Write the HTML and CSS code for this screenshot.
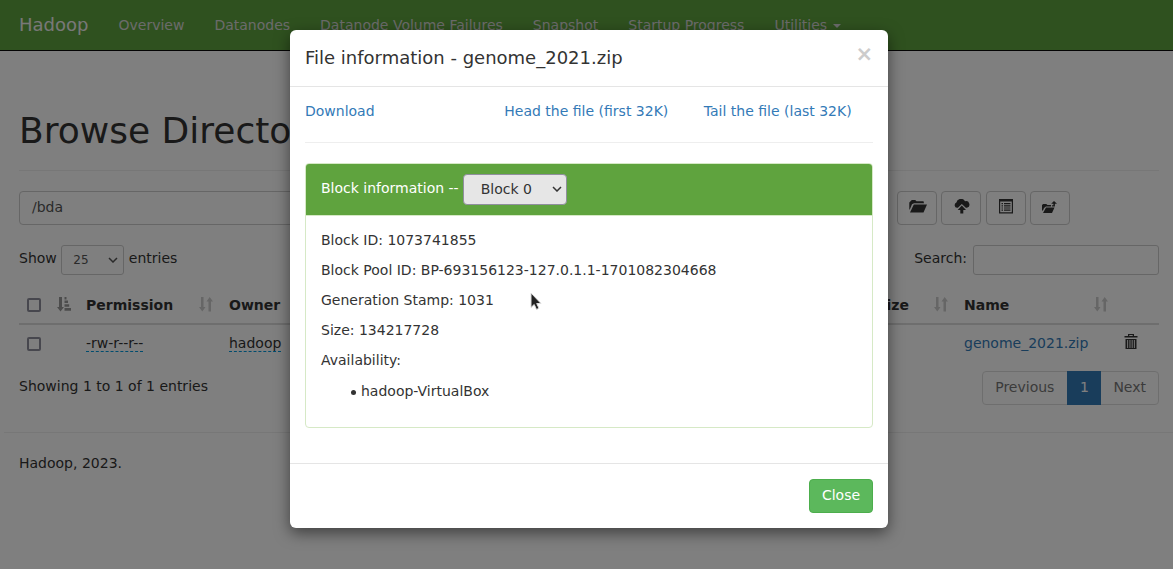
FILE: index.html
```
<!DOCTYPE html>
<html lang="en">
<head>
<meta charset="utf-8">
<title>Browsing HDFS</title>
<link rel="stylesheet" href="styles.css">
</head>
<body>
<svg width="0" height="0" class="sprite">
  <symbol id="sort" viewBox="0 0 14 15"><path d="M2 0h2.500v10h2L3.300 14.500 0 10h2zM9.500 14.500V4.500h-2L10.700 0 14 4.500h-2v10z"/></symbol>
  <symbol id="sort-asc" viewBox="0 0 14 15"><path d="M2 0h3v10h2l-3.500 4.500L0 10h2zM7.500 0h2v2.500h-2zM7.500 3.500H11V6H7.500zM7.500 7.300h4.700v2.500H7.500zM7.500 11h6.500v2.700H7.500z"/></symbol>
  <symbol id="chevron" viewBox="0 0 10 6"><path d="M1 1l4 4 4-4" fill="none" stroke="currentColor" stroke-width="1.500"/></symbol>
</svg>
<header class="navbar">
  <a class="brand">Hadoop</a>
  <nav class="nav"><a>Overview</a><a>Datanodes</a><a>Datanode Volume Failures</a><a>Snapshot</a><a>Startup Progress</a><a>Utilities<i class="caret"></i></a></nav>
</header>
<main class="container">
  <h1 class="page-title">Browse Directory</h1>
  <div class="toolbar">
    <div class="path">/bda</div>
    <div class="buttons">
      <span class="tool"><svg width="18" height="13" viewBox="0 0 18 13"><path d="M.3 9.500V2.500L1.800 1l1-1h3.400l1.300 1.300h7L15 3.300H5L3 4.300.8 9.500zM1 12.500L4.800 4.500H18l-3.500 8z"/></svg></span>
      <span class="tool"><svg width="16" height="15" viewBox="0 0 16 15"><path d="M3 8.800A2.700 2.700 0 0 1 2.400 3.600 4.600 4.600 0 0 1 11 2.300 3.300 3.300 0 0 1 13 8.800h-1.200L7.800 5 3.900 8.800z"/><path d="M7.800 6.500L12 11H9.300v3.500h-3V11H3.700z"/></svg></span>
      <span class="tool"><svg width="14" height="15" viewBox="0 0 14 15"><path fill-rule="evenodd" d="M0 0h14v14.500H0zM1.200 2.500v10.800h11.600V2.500z"/><path d="M2.500 4h1.500v1.200H2.500zM5 4h6.500v1.200H5zM2.500 6.200h1.500v1.200H2.500zM5 6.200h6.500v1.200H5zM2.500 8.400h1.500v1.200H2.500zM5 8.400h6.500v1.200H5zM2.500 10.600h1.500v1.200H2.500zM5 10.600h6.500v1.200H5z"/></svg></span>
      <span class="tool low"><svg width="15" height="13" viewBox="0 0 15 13"><path d="M0 9V4L1.200 3h3L5.500 4H9v1.400H4L2 7 .8 10zM1 12l3-5.500h8.500L10 12zM12 0l3 2.700h-2.100V5.500h-3V4.300h1.500V2.700H9.200z"/></svg></span>
    </div>
  </div>
  <div class="filters">
    <label class="length">Show <span class="select-sm">25<svg width="10" height="6"><use href="#chevron"/></svg></span> entries</label>
    <label class="search">Search: <span class="search-box"></span></label>
  </div>
  <div class="table">
    <div class="tr head">
      <span class="check"></span><svg class="sort on"><use href="#sort-asc"/></svg>
      <b>Permission</b><svg class="sort"><use href="#sort"/></svg>
      <b>Owner</b><b class="size">Size</b><svg class="sort"><use href="#sort"/></svg>
      <b>Name</b><svg class="sort"><use href="#sort"/></svg>
    </div>
    <div class="tr row">
      <span class="check"></span>
      <span class="perm"><span class="edit">-rw-r--r--</span></span>
      <span class="owner"><span class="edit">hadoop</span></span>
      <a class="link name">genome_2021.zip</a>
      <svg class="trash" viewBox="0 0 14 16"><path fill-rule="evenodd" d="M4 0h6v2h3.500v1.500H.5V2H4zM5.300 1.100V2h3.400v-.9zM1.500 5h11v10h-11zM3.200 6v8h.9V6zM5.500 6v8h.9V6zM7.700 6v8h.9V6zM9.900 6v8h.9V6z"/></svg>
    </div>
  </div>
  <div class="summary">
    <span>Showing 1 to 1 of 1 entries</span>
    <div class="pages"><span>Previous</span><span class="current">1</span><span>Next</span></div>
  </div>
</main>
<footer class="footer">Hadoop, 2023.</footer>

<div class="backdrop">
  <section class="modal">
    <header class="modal-head"><h4>File information - genome_2021.zip</h4><span class="x">×</span></header>
    <div class="modal-body">
      <div class="actions"><a>Download</a><a>Head the file (first 32K)</a><a>Tail the file (last 32K)</a></div>
      <div class="panel">
        <div class="panel-head">Block information -- <span class="block-select">Block 0<svg width="10" height="6"><use href="#chevron"/></svg></span></div>
        <div class="panel-body">
          <p>Block ID: 1073741855</p>
          <p>Block Pool ID: BP-693156123-127.0.1.1-1701082304668</p>
          <p>Generation Stamp: 1031</p>
          <p>Size: 134217728</p>
          <p>Availability:</p>
          <ul><li>hadoop-VirtualBox</li></ul>
        </div>
      </div>
    </div>
    <footer class="modal-foot"><button class="close-btn">Close</button></footer>
  </section>
  <svg class="cursor" viewBox="0 0 12 19"><path d="M1 1v14.500l3.200-3 2.300 5 2.500-1.200-2.300-4.800H11z" fill="#222" stroke="#ddd"/></svg>
</div>
</body>
</html>
```
FILE: styles.css
```
* { box-sizing: border-box; }
body { margin: 0; height: 569px; overflow: hidden; font: 14px/20px "DejaVu Sans", sans-serif; color: #333; background: #fff; }
h1, h4, p, ul { margin: 0; font-weight: 400; }
svg { fill: currentColor; flex: none; }
.sprite { position: absolute; }
.navbar { display: flex; height: 51px; padding-left: 19px; background: #5fa33e; border-bottom: 1px solid #080808; line-height: 50px; }
.brand { width: 84.500px; font-size: 18px; color: #f0f0f0; }
.nav { display: flex; color: #d6d6d6; }
.nav a { padding: 0 15px; white-space: nowrap; }
.caret { display: inline-block; margin-left: 6px; vertical-align: middle; border: 4px solid transparent; border-top-color: #d6d6d6; border-bottom: 0; }
.container { padding: 60px 14px 0 19px; }
.page-title { height: 60px; line-height: 40px; font-size: 36px; border-bottom: 1px solid #eee; }
.toolbar { display: flex; justify-content: space-between; margin-top: 20px; }
.path { width: 860px; height: 34px; padding: 5px 12px; border: 1px solid #ccc; border-radius: 4px; color: #555; }
.buttons { display: flex; gap: 4.300px; margin-right: 89px; }
.tool { width: 40px; height: 34px; border: 1px solid #ccc; border-radius: 4px; display: flex; align-items: center; justify-content: center; padding: 0 0 3px 1px; }
.low { padding: 0 2px 1px 0; }
.filters { display: flex; justify-content: space-between; margin-top: 20px; line-height: 26px; }
.length, .search { display: flex; gap: 4.500px; }
.search { gap: 6px; }
.select-sm { display: flex; align-items: center; justify-content: space-between; width: 63px; height: 30px; padding: 0 5px 0 11px; border: 1px solid #ccc; border-radius: 3px; font-size: 12px; color: #555; }
.search-box { width: 186px; height: 30px; border: 1px solid #ccc; border-radius: 3px; }
.table { margin-top: 14px; }
.tr { display: grid; align-items: center; }
.head { height: 36px; padding-bottom: 2px; grid-template-columns: 38px 29px 113px 30px 640px 65px 30px 130px 20px; border-bottom: 2px solid #ddd; }
.size { text-align: right; padding-right: 25px; }
.row { height: 37px; padding-bottom: 2px; grid-template-columns: 67px 143px 735px 160px 20px; }
.check { width: 14px; height: 14px; margin-left: 8px; border: 2px solid #8f8f9d; border-radius: 2px; }
.row .check { margin-top: 3px; }
.sort { width: 14px; height: 15px; color: #ccc; margin-top: -1px; }
.on { color: #999; }
.edit { border-bottom: 1px dashed #0099dd; }
.link, .actions a { color: #337ab7; }
.trash { width: 14px; height: 16px; margin-top: -1px; }
.summary { display: flex; justify-content: space-between; padding-top: 14px; }
.pages { display: flex; height: 34px; margin-top: -5px; border: 1px solid #ddd; border-radius: 4px; color: #777; line-height: 30px; }
.pages span { padding: 0 12px; }
.pages .current { width: 34px; padding: 0; text-align: center; height: 34px; margin: -1px 0 0 1px; background: #337ab7; color: #fff; line-height: 32px; }
.footer { margin: 27px 0 0 4px; padding: 20px 15px; border-top: 1px solid #eee; }

.backdrop { position: absolute; inset: 0; padding: 30px 0 0 290px; background: rgba(0, 0, 0, .5); }
.modal { width: 598px; height: 498px; background: #fff; border-radius: 6px; box-shadow: 0 5px 15px rgba(0, 0, 0, .5); display: flex; flex-direction: column; }
.modal-head { display: flex; justify-content: space-between; height: 57px; padding: 15px; border-bottom: 1px solid #e5e5e5; }
.modal-head h4 { font-size: 18px; line-height: 26px; }
.x { font-size: 21px; line-height: 18px; font-weight: 700; color: #ccc; }
.modal-body { padding: 14px 15px 0; height: 376px; }
.actions { display: grid; grid-template-columns: 199.300px 199.500px 1fr; height: 42px; border-bottom: 1px solid #eee; }
.panel { height: 265px; margin-top: 20px; border: 1px solid #d6e9c6; border-radius: 4px; overflow: hidden; }
.panel-head { display: flex; gap: 4px; height: 52px; padding: 10px 15px; background: #5fa33e; color: #fff; border-bottom: 1px solid #d6e9c6; line-height: 28px; }
.block-select { display: flex; align-items: center; justify-content: space-between; width: 104px; height: 31px; padding: 0 4px 1px 17px; border: 1px solid #8f8f9d; border-radius: 4px; background: #e6e6e6; color: #333; }
.panel-body { padding: 14px 15px; }
.panel-body p { margin-bottom: 10px; }
.panel-body ul { padding-left: 30px; padding-top: 1px; list-style: none; }
.panel-body li { display: flex; align-items: center; gap: 7px; }
.panel-body li::before { content: ""; width: 5px; height: 5px; margin: 2px -2px 0 0; border-radius: 50%; background: #333; }
.panel-body li { padding-left: 0; }
.modal-foot { display: flex; justify-content: flex-end; padding: 15px; border-top: 1px solid #e5e5e5; }
.close-btn { width: 64px; height: 34px; border: 1px solid #4cae4c; border-radius: 4px; background: #5cb85c; color: #fff; font: inherit; padding: 0 0 2px; }
.cursor { position: absolute; left: 530px; top: 292px; width: 12px; height: 19px; }
```
